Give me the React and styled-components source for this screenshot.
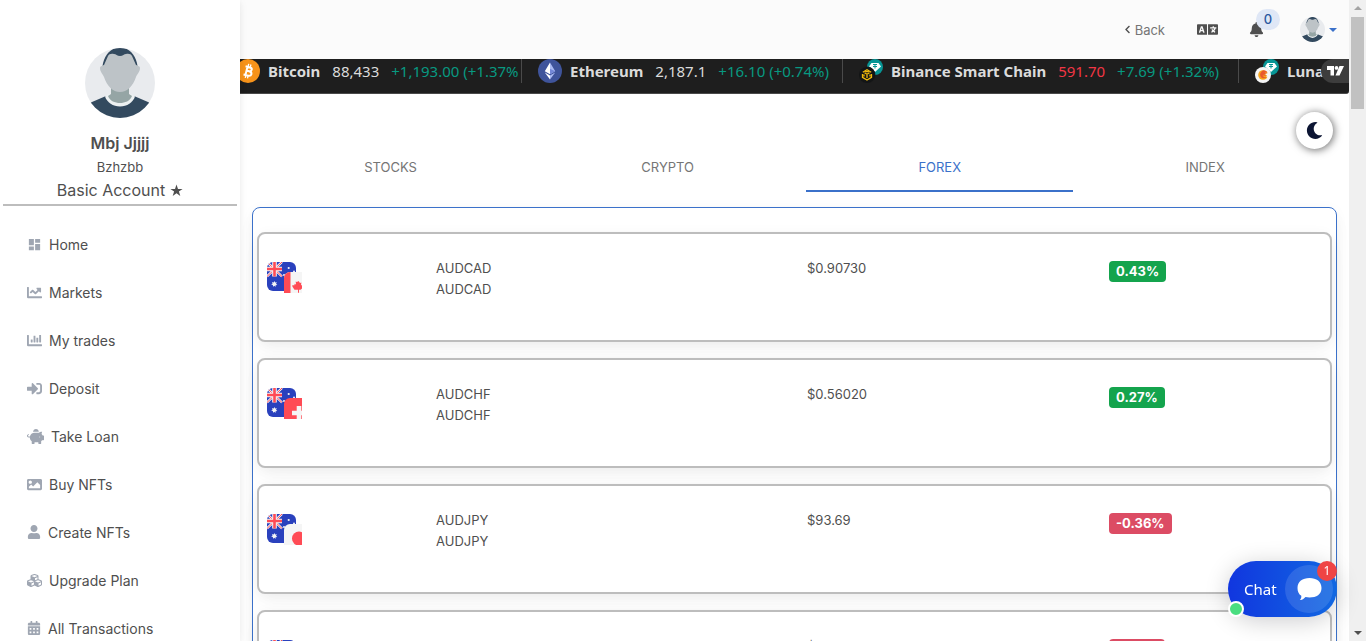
import React from "react";
import styled, { createGlobalStyle } from "styled-components";
import {
  FaChartLine, FaChartBar, FaSignInAlt, FaPiggyBank, FaImage, FaUser, FaCubes, FaCalendarAlt, FaBell, FaMoon, FaChevronLeft, FaLanguage,
} from "react-icons/fa";
import { MdDashboard } from "react-icons/md";

const Global = createGlobalStyle`
  *, *::before, *::after { box-sizing: border-box; }
  body { margin: 0; background: #fff; color: #4f4f4f; font-family: Inter, sans-serif; font-size: 14px; }
  button { font: inherit; border: 0; background: none; padding: 0; cursor: pointer; color: inherit; }
  a { color: inherit; text-decoration: none; }
  svg { display: block; flex: none; }
`;

const Shell = styled.div`
  display: flex;
  height: 100vh;
  overflow: hidden;
`;

const Sidebar = styled.aside`
  flex: none;
  width: 240px;
  padding: 48px 3px 0;
  overflow: hidden;
  background: #fff;
  box-shadow: 0 2px 5px rgba(0, 0, 0, 0.05), 0 2px 10px rgba(0, 0, 0, 0.05);
  z-index: 2;
`;

const Profile = styled.header`
  display: flex;
  flex-direction: column;
  align-items: center;
  height: 158px;
  border-bottom: 2px solid #bdbdbd;
`;

const ProfileName = styled.strong`
  margin-top: 13px;
  font-size: 16px;
  line-height: 24px;
  font-weight: 600;
`;

const ProfileHandle = styled.span`
  font-size: 13px;
  line-height: 25px;
`;

const ProfilePlan = styled.span`
  display: flex;
  align-items: center;
  gap: 5px;
  font-size: 16px;
  line-height: 20px;
`;

const Menu = styled.nav`
  display: flex;
  flex-direction: column;
  padding: 14px 24px 0;
`;

const MenuLink = styled.a`
  display: flex;
  align-items: center;
  gap: 7px;
  height: 48px;
  font-size: 14px;
  white-space: nowrap;
  svg { color: #9fa6b2; }
`;

const Page = styled.main`
  flex: 1;
  min-width: 0;
  display: flex;
  flex-direction: column;
`;

const TopBar = styled.header`
  flex: none;
  display: flex;
  align-items: center;
  justify-content: flex-end;
  height: 59px;
  padding-right: 12px;
  background: #fbfbfb;
`;

const BackLink = styled.a`
  display: flex;
  align-items: center;
  gap: 3px;
  margin-right: 32px;
  font-size: 13px;
  color: #757575;
  svg { color: #4f4f4f; }
`;

const BellButton = styled.button`
  position: relative;
  margin: 0 36px 0 31px;
`;

const BellCount = styled.span`
  position: absolute;
  left: 7px;
  bottom: 7px;
  width: 24px;
  height: 21px;
  border-radius: 11px;
  background: #dfe7f6;
  color: #2c58a0;
  font-size: 13px;
  line-height: 21px;
  font-weight: 500;
  text-align: center;
`;

const AccountButton = styled.button`
  display: flex;
  align-items: center;
  gap: 4px;
`;

const Caret = styled.span`
  border: 4px solid transparent;
  border-top-color: #3b71ca;
  border-bottom: 0;
`;

const Ticker = styled.section`
  position: relative;
  flex: none;
  display: flex;
  height: 35px;
  overflow: hidden;
  background: #1e1e1e;
  border-bottom: 1px solid #4a4a4a;
  border-radius: 0 0 3px 0;
  font-family: "Noto Sans", sans-serif;
  font-size: 15px;
  line-height: 24px;
  color: #dbdbdb;
`;

const Quote = styled.a`
  flex: none;
  display: flex;
  gap: 12px;
  width: ${(p) => p.$width}px;
  height: 24px;
  padding-left: ${(p) => p.$pad}px;
  overflow: hidden;
  white-space: nowrap;
  border-right: 1px solid #4a4a4a;
`;

const QuoteName = styled.strong`
  display: flex;
  gap: 8px;
`;

const Change = styled.span`
  color: ${(p) => (p.$down ? "#f23645" : "#089981")};
`;

const TickerBrand = styled.a`
  position: absolute;
  right: 0;
  top: 0;
  display: flex;
  align-items: center;
  justify-content: center;
  width: 28px;
  height: 24px;
  border-radius: 12px 0 0 12px;
  background: #3d3d3d;
`;

const Content = styled.div`
  flex: 1;
  min-height: 0;
  padding: 49px 12px 0;
  overflow: hidden;
`;

const Tabs = styled.div`
  display: flex;
`;

const Tab = styled.button`
  flex: 1 1 auto;
  height: 49px;
  border-bottom: 2px solid ${(p) => (p.$active ? "#3b71ca" : "transparent")};
  font-size: 13px;
  line-height: 18px;
  color: ${(p) => (p.$active ? "#3b71ca" : "#757575")};
`;

const Panel = styled.section`
  display: flex;
  flex-direction: column;
  gap: 16px;
  margin-top: 15px;
  padding: 24px 4px;
  border: 1px solid #3b71ca;
  border-radius: 8px;
  box-shadow: 0 2px 15px -3px rgba(0, 0, 0, 0.07), 0 10px 20px -2px rgba(0, 0, 0, 0.04);
`;

const Card = styled.article`
  flex: none;
  display: grid;
  grid-template-columns: 169fr 371fr 302fr 221fr;
  align-items: start;
  height: 110px;
  padding: 24px 0 0 8px;
  border: 2px solid #bdbdbd;
  border-radius: 8px;
  background: #fff;
  box-shadow: 0 2px 15px -3px rgba(0, 0, 0, 0.07), 0 10px 20px -2px rgba(0, 0, 0, 0.04);
  font-size: 13px;
  line-height: 21px;
`;

const PairFlags = styled.svg`
  margin-top: 4px;
`;

const Pair = styled.div`
  display: flex;
  flex-direction: column;
`;

const Badge = styled.span`
  justify-self: start;
  margin-top: 3px;
  padding: 0 7px;
  border-radius: 4px;
  background: ${(p) => (p.$down ? "#dc4c64" : "#14a44d")};
  color: #fff;
  font-weight: 700;
`;

const ThemeButton = styled.button`
  position: fixed;
  top: 112px;
  right: 33px;
  display: flex;
  align-items: center;
  justify-content: center;
  width: 37px;
  height: 37px;
  border-radius: 50%;
  background: #fff;
  box-shadow: 1px 1px 8px rgba(0, 0, 0, 0.6);
  color: #0c1533;
`;

const ChatButton = styled.button`
  position: fixed;
  right: 29px;
  bottom: 24px;
  display: flex;
  align-items: center;
  justify-content: space-between;
  width: 109px;
  height: 56px;
  padding: 0 4px 0 16px;
  border-radius: 28px;
  background: linear-gradient(90deg, #1136df, #1168e2);
  box-shadow: 0 4px 24px rgba(2, 6, 16, 0.2);
  color: #fff;
  font-family: "Noto Sans", sans-serif;
  font-size: 15px;
  z-index: 3;
`;

const ChatBubble = styled.span`
  display: flex;
  align-items: center;
  justify-content: center;
  width: 48px;
  height: 48px;
  border-radius: 50%;
  background: rgba(255, 255, 255, 0.12);
`;

const ChatCount = styled.span`
  position: absolute;
  top: 0;
  right: 0;
  width: 20px;
  height: 20px;
  border-radius: 50%;
  background: #ef4444;
  font-size: 12px;
  line-height: 20px;
`;

const ChatOnline = styled.span`
  position: absolute;
  left: 0;
  bottom: 0;
  width: 16px;
  height: 16px;
  border: 2px solid #fff;
  border-radius: 50%;
  background: #4ade80;
`;

const ScrollTrack = styled.div`
  flex: none;
  display: flex;
  flex-direction: column;
  align-items: center;
  width: 17px;
  padding: 6px 0;
  background: #f0f0f0;
`;

const ScrollArrow = styled.span`
  flex: none;
  border: 4px solid transparent;
  ${(p) => (p.$up ? "border-bottom-color: #a3a3a3; border-top: 0;" : "border-top-color: #505050; border-bottom: 0; margin-top: auto;")}
`;

const ScrollThumb = styled.span`
  width: 13px;
  height: 92px;
  margin-top: 7px;
  background: #c1c1c1;
`;

function Avatar({ size, id }) {
  return (
    <svg width={size} height={size} viewBox="0 0 70 70" role="img" aria-label="Profile">
      <clipPath id={id}><circle cx="35" cy="35" r="35" /></clipPath>
      <g clipPath={`url(#${id})`}>
        <path fill="#e9ebee" d="M0 0h70v70H0z" />
        <path fill="#334a5f" d="M0 58l7-4 14-6h28l14 6 7 4v12H0z" />
        <path fill="#ecf0f1" d="M20 48.500l4-2.500h22l4 2.500c-2 6-8 10-15 10s-13-4-15-10z" />
        <path fill="#95a5a5" d="M26 38h18v8l3 2c-2 5-7 7-12 7s-10-2-12-7l3-2z" />
        <path fill="#334a5f" d="M17.500 18C19 8 25-.5 35-.5S51 8 52.500 18z" />
        <path fill="#bdc3c7" d="M15 20c0-2 2-2 4-3l4-9c1-2 3-2.500 6-2 2 0 3 2 6 2s4-2 6-2c3-.5 5 0 6 2l4 9c2 1 4 1 4 3 0 4-3 6-4 9-3 9-9 15-16 15s-13-6-16-15c-1-3-4-5-4-9z" />
      </g>
    </svg>
  );
}

function StarIcon() {
  return (
    <svg width="13" height="13" viewBox="0 0 13 13" fill="currentColor">
      <path d="M6.500.5L8 4.900h4.600L8.900 7.600l1.400 4.500-3.800-2.800-3.800 2.800 1.400-4.500L.4 4.900H5z" />
    </svg>
  );
}

function BitcoinIcon() {
  return (
    <svg width="20" height="24" viewBox="4 0 20 24">
      <circle cx="12" cy="12" r="12" fill="#f7931a" />
      <g transform="rotate(14 12 12)" fill="none" stroke="#fff" strokeWidth="2">
        <path d="M8.500 8h4.700c2.800 0 2.800 4 0 4H10.300M13.200 12c3.800 0 3.800 4.500 0 4.500H8.500M10.500 8v8.500" />
        <path strokeWidth="1.300" d="M11 5v2.500M13.300 5v2.500M11 17v2.300M13.300 17v2.300" />
      </g>
    </svg>
  );
}

function EthereumIcon() {
  return (
    <svg width="24" height="24" viewBox="0 0 24 24">
      <circle cx="12" cy="12" r="12" fill="#3f549b" />
      <path fill="#fff" d="M12 3.500L6.800 12.200 12 15.200zM12 16.400l-5.200-3L12 20.500z" />
      <path fill="#a9b9f2" d="M12 3.500l5.200 8.700-5.200 3zM12 16.400l5.200-3-5.200 7.100z" />
      <path fill="#7488d8" d="M12 9.800l5.200 2.400-5.200 3z" />
    </svg>
  );
}

function TetherMark() {
  return (
    <g>
      <circle cx="16" cy="8" r="8" fill="#079595" />
      <path fill="#fff" d="M12.500 4h7l2.500 3.500-6 5.500-6-5.500z" />
      <path fill="none" stroke="#079595" strokeWidth="1" d="M14 5.500h4M16 5.500v4M14 7.500h4" />
    </g>
  );
}

function BinanceIcon() {
  return (
    <svg width="24" height="24" viewBox="0 0 24 24">
      <TetherMark />
      <circle cx="8" cy="16" r="8.500" fill="#1e1e1e" />
      <circle cx="8" cy="16" r="8" fill="#131516" />
      <path fill="none" stroke="#f0b90b" strokeWidth="1.300" d="M3.800 13.200L8 10.800l4.200 2.400M3.500 15v3.300L8 21l4.500-2.700V15M5.500 13.800L8 15.200l2.500-1.400M8 15v4M5 15.500v2M11 15.500v2M6.300 12.700h3.400" />
    </svg>
  );
}

function LunaIcon() {
  return (
    <svg width="24" height="24" viewBox="0 0 24 24">
      <TetherMark />
      <circle cx="8" cy="16" r="8" fill="#f5f5f5" />
      <circle cx="8" cy="16" r="4.800" fill="#f7a51c" />
      <path fill="#e8592f" d="M8 11.300c2 0 3.600.8 4.500 2.200l-3-.2 2.200 1.600-3.400.2 3.400 1.200c-1.600.7-3 .6-4.200 0 .6 1.600 2.200 2.300 4.200 1.900-1.600 1.800-5 1.500-6.200-.8-1-2-.2-4.300 2.500-6.100z" />
      <path fill="#f5f5f5" d="M10 15l4-1v4l-3-.5 1-1z" />
    </svg>
  );
}

function TradingViewMark() {
  return (
    <svg width="17" height="11" viewBox="0 0 17 11" fill="#fff">
      <path d="M0 0h7v9.500H3.500V4H0zM12.500 0H17l-4.500 9.500H8.500z" />
      <circle cx="9.500" cy="1.900" r="1.900" />
    </svg>
  );
}

function ChatMark() {
  return (
    <svg width="25" height="23" viewBox="0 0 25 23" fill="#fff">
      <path d="M12.500 0C19.500 0 24.500 3.500 24.500 10s-5 9.500-12 9.500c-1.500 0-2.700-.1-4-.4C7 20.800 5.300 22.300 3 22c1-1.200 1.500-2.600 1.300-4.200C1.700 16.200.5 13.500.5 10c0-6.500 5-10 12-10z" />
    </svg>
  );
}

const star = "M0-3l.7 1.600 1.700-.3-.9 1.500 1.300 1.200-1.700.3L1 3-.1 1.700-1.500 2.800l-.1-1.700-1.700-.5L-1.900-.4l-.6-1.600 1.700.4z";

function SecondFlag({ code }) {
  if (code === "CAD") {
    return (
      <g>
        <path fill="#f5f5f5" d="M0 0h29v29H0z" />
        <path fill="#ff4b55" d="M0 0h6.500v29H0zM22.500 0H29v29h-6.500zM14.500 9l1.500 2 1.300-.5-.3 3 2.500-1 .8 2.300-3.800 3H15v3h-1v-3h-3.500l-2-3-.3-1.500h2.300v-1.500l1.500.7-.3-3 1.300.5z" />
      </g>
    );
  }
  if (code === "CHF") {
    return (
      <g>
        <path fill="#ff4b55" d="M0 0h29v29H0z" />
        <path fill="#f5f5f5" d="M12.700 8h4.600v4.700H22v4.600h-4.700V22h-4.600v-4.700H8v-4.600h4.700z" />
      </g>
    );
  }
  if (code === "JPY") {
    return (
      <g>
        <path fill="#f5f5f5" d="M0 0h29v29H0z" />
        <circle cx="15" cy="14.500" r="7" fill="#ff4b55" />
      </g>
    );
  }
  return <path fill="#2a41bd" d="M0 0h29v29H0z" />;
}

function Flags({ code }) {
  return (
    <PairFlags width="35" height="31" viewBox="0 0 35 31" aria-hidden="true">
      <clipPath id={`base-${code}`}><rect width="29" height="29" rx="6" /></clipPath>
      <clipPath id={`quote-${code}`}><rect width="29" height="29" rx="6" /></clipPath>
      <g clipPath={`url(#base-${code})`}>
        <path fill="#2a41bd" d="M0 0h29v29H0z" />
        <path stroke="#f5f5f5" strokeWidth="2.400" d="M0 0l15 14.500M15 0L0 14.500" />
        <path stroke="#ff4b55" strokeWidth="1" d="M0 0l15 14.500M15 0L0 14.500" />
        <path stroke="#f5f5f5" strokeWidth="4.600" d="M7.500 0v14.500M0 7h15" />
        <path stroke="#ff4b55" strokeWidth="2.600" d="M7.500 0v14.500M0 7h15" />
        <path fill="#f5f5f5" d={star} transform="translate(7.500 22)" />
        <g fill="#f5f5f5">
          <circle cx="21.700" cy="6" r="1.100" />
          <circle cx="17" cy="13" r="1" />
          <circle cx="27" cy="9.500" r="1" />
        </g>
      </g>
      <g transform="translate(17 10)">
        <g clipPath={`url(#quote-${code})`}><SecondFlag code={code} /></g>
      </g>
    </PairFlags>
  );
}

const menu = [
  ["Home", <MdDashboard size={15} />],
  ["Markets", <FaChartLine size={15} />],
  ["My trades", <FaChartBar size={15} />],
  ["Deposit", <FaSignInAlt size={15} />],
  ["Take Loan", <FaPiggyBank size={17} />],
  ["Buy NFTs", <FaImage size={15} />],
  ["Create NFTs", <FaUser size={14} />],
  ["Upgrade Plan", <FaCubes size={15} />],
  ["All Transactions", <FaCalendarAlt size={14} />],
];

const pairs = [
  { base: "AUD", code: "CAD", price: "$0.90730", change: "0.43%" },
  { base: "AUD", code: "CHF", price: "$0.56020", change: "0.27%" },
  { base: "AUD", code: "JPY", price: "$93.69", change: "-0.36%" },
  { base: "AUD", code: "NZD", price: "$1.11", change: "-0.11%" },
];

export default function App() {
  return (
    <Shell>
      <Global />
      <Sidebar>
        <Profile>
          <Avatar size={70} id="profile-large" />
          <ProfileName>Mbj Jjjjj</ProfileName>
          <ProfileHandle>Bzhzbb</ProfileHandle>
          <ProfilePlan>Basic Account <StarIcon /></ProfilePlan>
        </Profile>
        <Menu>
          {menu.map(([label, icon]) => (
            <MenuLink href="#" key={label}>{icon}{label}</MenuLink>
          ))}
        </Menu>
      </Sidebar>
      <Page>
        <TopBar>
          <BackLink href="#"><FaChevronLeft size={9} />Back</BackLink>
          <button type="button" aria-label="Language"><FaLanguage size={21} color="#4f4f4f" /></button>
          <BellButton type="button" aria-label="Notifications">
            <FaBell size={15} color="#4f4f4f" />
            <BellCount>0</BellCount>
          </BellButton>
          <AccountButton type="button" aria-label="Account">
            <Avatar size={25} id="profile-small" />
            <Caret />
          </AccountButton>
        </TopBar>
        <Ticker>
          <Quote href="#" $width={282} $pad={0}>
            <QuoteName><BitcoinIcon />Bitcoin</QuoteName>
            <span>88,433</span><Change>+1,193.00 (+1.37%</Change>
          </Quote>
          <Quote href="#" $width={321} $pad={16}>
            <QuoteName><EthereumIcon />Ethereum</QuoteName>
            <span>2,187.1</span><Change>+16.10 (+0.74%)</Change>
          </Quote>
          <Quote href="#" $width={396} $pad={16}>
            <QuoteName><BinanceIcon />Binance Smart Chain</QuoteName>
            <Change $down>591.70</Change><Change>+7.69 (+1.32%)</Change>
          </Quote>
          <Quote href="#" $width={320} $pad={16}>
            <QuoteName><LunaIcon />Luna</QuoteName>
          </Quote>
          <TickerBrand href="#" aria-label="TradingView"><TradingViewMark /></TickerBrand>
        </Ticker>
        <Content>
          <Tabs role="tablist">
            {["STOCKS", "CRYPTO", "FOREX", "INDEX"].map((name) => (
              <Tab key={name} type="button" role="tab" aria-selected={name === "FOREX"} $active={name === "FOREX"}>{name}</Tab>
            ))}
          </Tabs>
          <Panel>
            {pairs.map(({ base, code, price, change }) => (
              <Card key={code}>
                <Flags code={code} />
                <Pair><span>{base}{code}</span><span>{base}{code}</span></Pair>
                <span>{price}</span>
                <Badge $down={change.startsWith("-")}>{change}</Badge>
              </Card>
            ))}
          </Panel>
        </Content>
      </Page>
      <ScrollTrack aria-hidden="true">
        <ScrollArrow $up />
        <ScrollThumb />
        <ScrollArrow />
      </ScrollTrack>
      <ThemeButton type="button" aria-label="Dark mode"><FaMoon size={17} /></ThemeButton>
      <ChatButton type="button">
        Chat
        <ChatBubble><ChatMark /></ChatBubble>
        <ChatCount>1</ChatCount>
        <ChatOnline />
      </ChatButton>
    </Shell>
  );
}
